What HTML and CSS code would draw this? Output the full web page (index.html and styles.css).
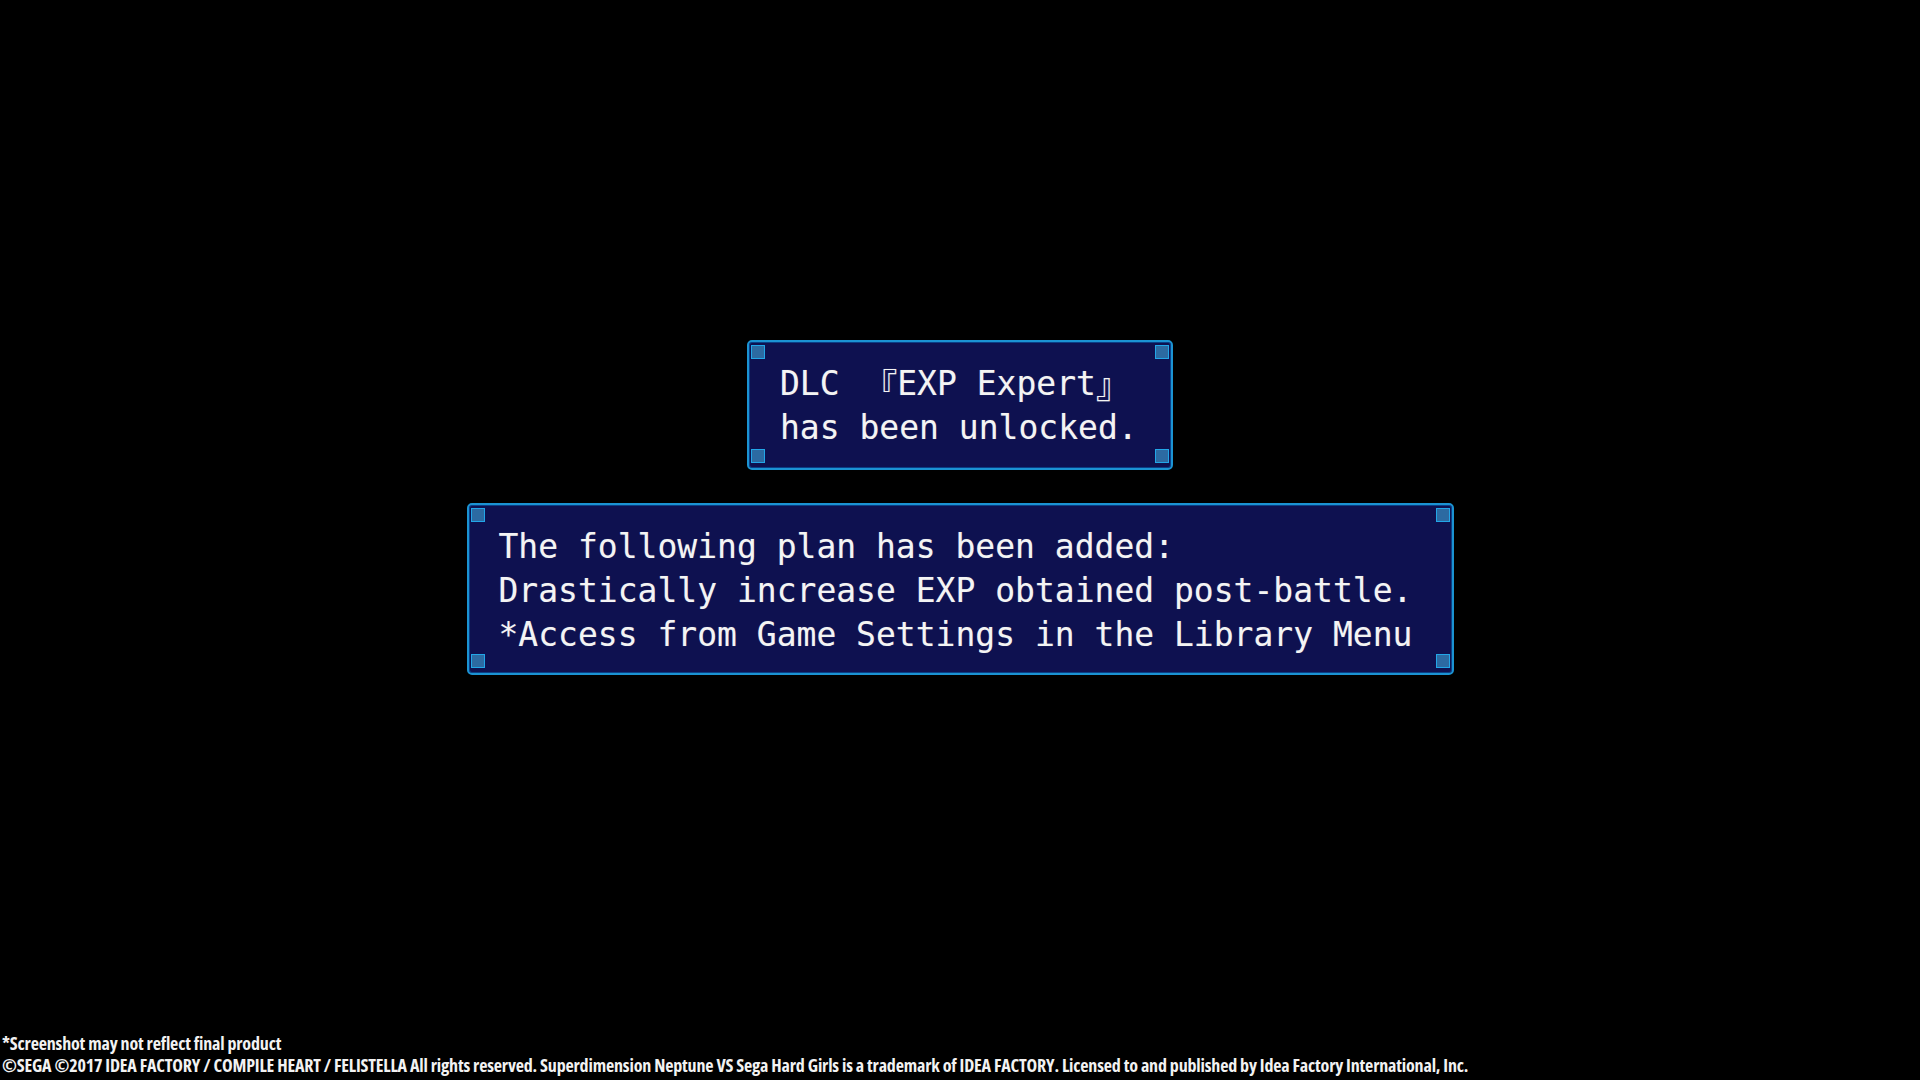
FILE: index.html
```html
<!DOCTYPE html>
<html lang="en">
<head>
<meta charset="utf-8">
<title>DLC unlocked</title>
<link rel="stylesheet" href="styles.css">
</head>
<body>
<div class="screen">
  <main class="dialogs">
    <section class="panel panel-small">
      <span class="corner tl"></span><span class="corner tr"></span>
      <span class="corner bl"></span><span class="corner br"></span>
      <p class="line">DLC <span class="wide">『</span>EXP Expert<span class="wide wide-l">』</span></p>
      <p class="line">has been unlocked.</p>
    </section>
    <section class="panel panel-large">
      <span class="corner tl"></span><span class="corner tr"></span>
      <span class="corner bl"></span><span class="corner br"></span>
      <p class="line">The following plan has been added:</p>
      <p class="line">Drastically increase EXP obtained post-battle.</p>
      <p class="line">*Access from Game Settings in the Library Menu</p>
    </section>
  </main>
  <footer class="legal">
    <p>*Screenshot may not reflect final product</p>
    <p>©SEGA ©2017 IDEA FACTORY / COMPILE HEART / FELISTELLA All rights reserved. Superdimension Neptune VS Sega Hard Girls is a trademark of IDEA FACTORY. Licensed to and published by Idea Factory International, Inc.</p>
  </footer>
</div>
</body>
</html>
```
FILE: styles.css
```css
html, body {
  margin: 0;
  padding: 0;
  background: #000;
}
.screen {
  width: 1920px;
  height: 1080px;
  display: flex;
  flex-direction: column;
  overflow: hidden;
}
.dialogs {
  display: flex;
  flex-direction: column;
  align-items: center;
  padding-top: 340px;
  gap: 33px;
}
.panel {
  position: relative;
  box-sizing: border-box;
  background: #0e1150;
  border: 2px solid #1b93d3;
  border-radius: 5px;
  box-shadow: inset 0 0 0 1px #0b3f86;
  font-family: "DejaVu Sans Mono", "Noto Sans CJK JP", monospace;
  font-size: 33px;
  line-height: 44px;
  color: #f4f4f4;
  text-shadow: 0 0 1px #555a80;
}
.panel-small {
  width: 426px;
  height: 130px;
  padding: 20px 0 0 31px;
}
.panel-large {
  width: 987px;
  height: 172px;
  padding: 20px 0 0 30px;
}
.line {
  margin: 0;
  white-space: pre;
}
.wide {
  display: inline-block;
  width: 2ch;
  text-align: right;
  font-family: "Noto Sans CJK JP", sans-serif;
  font-size: 34px;
  vertical-align: top;
}
.wide-l {
  text-align: left;
}
.corner {
  position: absolute;
  width: 12px;
  height: 12px;
  background: #2c6aa2;
  border: 1px solid #22a6e8;
}
.tl { top: 3px; left: 2px; }
.tr { top: 3px; right: 2px; }
.bl { bottom: 5px; left: 2px; }
.br { bottom: 5px; right: 2px; }
.legal {
  margin-top: auto;
  padding: 0 0 4px 2px;
  font-family: "Liberation Sans Narrow", "Open Sans", sans-serif;
  font-stretch: condensed;
  font-weight: 700;
  font-size: 18px;
  line-height: 22px;
  color: #f2f2f2;
  letter-spacing: -0.17px;
}
.legal p {
  margin: 0;
  white-space: nowrap;
}
```
